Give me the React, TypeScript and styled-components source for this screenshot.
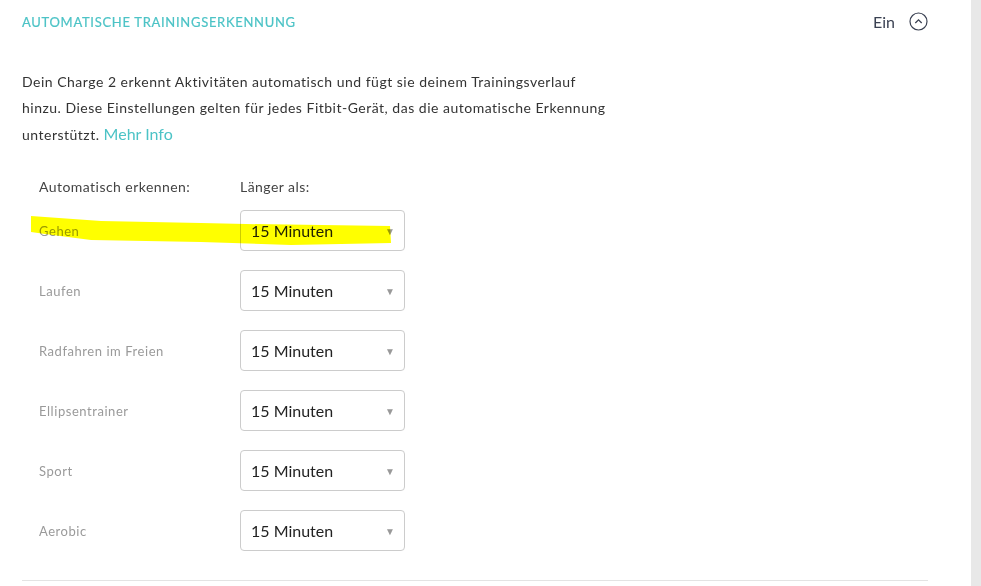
import styled, { createGlobalStyle } from 'styled-components';

const GlobalStyle = createGlobalStyle`
  html, body {
    margin: 0;
    padding: 0;
    background: #fff;
  }
  body {
    font-family: Lato, "Open Sans", sans-serif;
    color: #333;
  }
`;

const rows = ['Gehen', 'Laufen', 'Radfahren im Freien', 'Ellipsentrainer', 'Sport', 'Aerobic'];

const ChevronCircle = () => (
  <svg width="19" height="19" viewBox="0 0 19 19" fill="none">
    <circle cx="9.5" cy="9.5" r="8.5" stroke="#3a4152" strokeWidth="1.2" />
    <path d="M6.3 11 L9.5 7.8 L12.7 11" stroke="#3a4152" strokeWidth="1.3" />
  </svg>
);

const App = () => {
  return (
    <>
      <GlobalStyle />
      <Page>
        <Panel>
          <Header>
            <Title>Automatische Trainingserkennung</Title>
            <Toggle>
              Ein
              <ChevronCircle />
            </Toggle>
          </Header>
          <Intro>
            Dein Charge 2 erkennt Aktivitäten automatisch und fügt sie deinem Trainingsverlauf<br />
            hinzu. Diese Einstellungen gelten für jedes Fitbit-Gerät, das die automatische Erkennung<br />
            unterstützt. <MoreLink href="#">Mehr Info</MoreLink>
          </Intro>
          <SettingsGrid>
            <ColumnHead>Automatisch erkennen:</ColumnHead>
            <ColumnHead>Länger als:</ColumnHead>
            {rows.map((name) => (
              <Row key={name}>
                <RowLabel>{name}</RowLabel>
                <SelectBox>
                  <span>15 Minuten</span>
                  <Caret>▼</Caret>
                </SelectBox>
              </Row>
            ))}
            {/* hand-drawn highlighter stroke over the first row */}
            <Marker viewBox="0 0 362 32" preserveAspectRatio="none">
              <path
                d="M0 0 L70 5 L170 7 L215 8 L359 10 L360 27 L260 29 L170 26 L60 24 L14 18 L0 16 Z"
                fill="#ffff00"
              />
            </Marker>
          </SettingsGrid>
          <Divider />
        </Panel>
        <ScrollTrack />
      </Page>
    </>
  );
};

const Page = styled.div`
  display: flex;
  width: 981px;
  height: 586px;
  overflow: hidden;
`;

const Panel = styled.div`
  flex: 1;
  padding: 0 43px 0 22px;
`;

const ScrollTrack = styled.div`
  width: 10px;
  background: #e8e8e8;
`;

const Header = styled.div`
  display: flex;
  justify-content: space-between;
  align-items: center;
  height: 43px;
`;

const Title = styled.h2`
  margin: 0;
  font-size: 13px;
  font-weight: 400;
  text-transform: uppercase;
  letter-spacing: 0.7px;
  color: #4cc3c6;
  -webkit-text-stroke: 0.2px #4cc3c6;
`;

const Toggle = styled.div`
  display: flex;
  align-items: center;
  gap: 14px;
  font-size: 16px;
  color: #3a4152;
`;

const Intro = styled.p`
  margin: 26px 0 0;
  font-size: 14px;
  line-height: 26px;
  letter-spacing: 0.5px;
  color: #333;
`;

const MoreLink = styled.a`
  font-size: 16px;
  letter-spacing: 0;
  color: #4cc3c6;
  text-decoration: none;
`;

const SettingsGrid = styled.div`
  position: relative;
  display: grid;
  grid-template-columns: 201px 165px;
  padding: 30px 0 0 17px;
  row-gap: 19px;
`;

const ColumnHead = styled.div`
  font-size: 14px;
  letter-spacing: 0.45px;
  color: #444;
  margin-bottom: -4px;
`;

const Row = styled.div`
  display: contents;
`;

const RowLabel = styled.div`
  align-self: center;
  font-size: 13px;
  letter-spacing: 0.55px;
  color: #9a9a9a;
`;

const SelectBox = styled.div`
  display: flex;
  align-items: center;
  justify-content: space-between;
  height: 41px;
  box-sizing: border-box;
  padding: 0 9px 0 10px;
  border: 1px solid #ccc;
  border-radius: 4px;
  font-size: 16px;
  color: #222;
  background: #fff;
`;

const Caret = styled.span`
  font-size: 10px;
  color: #999;
`;

const Marker = styled.svg`
  position: absolute;
  left: 9px;
  top: 68px;
  width: 362px;
  height: 32px;
  mix-blend-mode: multiply;
`;

const Divider = styled.div`
  margin-top: 29px;
  height: 1px;
  background: #e3e3e3;
`;

export default App;
